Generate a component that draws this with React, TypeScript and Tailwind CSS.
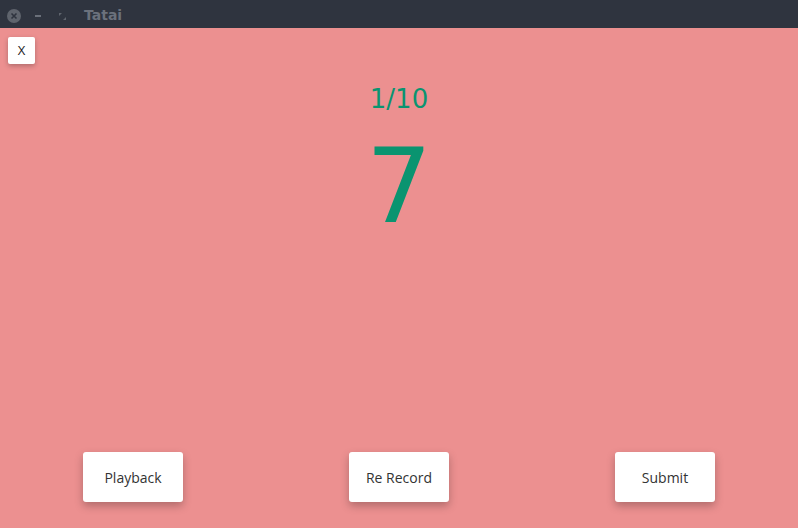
import React from "react";

export default function App() {
  return (
    <div className="w-[798px] h-[528px] flex flex-col overflow-hidden">
      <div className="h-[28px] bg-[#2f343f] flex items-center shrink-0">
        <div className="ml-[7px] w-[14px] h-[14px] rounded-full bg-[#5f646d] flex items-center justify-center mt-[4px]">
          <svg width="8" height="8" viewBox="0 0 8 8">
            <path d="M1.5 1.5 L6.5 6.5 M6.5 1.5 L1.5 6.5" stroke="#2f343f" strokeWidth="1.6" />
          </svg>
        </div>
        <div className="ml-[14px] w-[6px] h-[2px] bg-[#6b707a] mt-[4px]" />
        <svg className="ml-[18px] mt-[4px]" width="7" height="7" viewBox="0 0 7 7">
          <path d="M0 0 L3 0 L0 3 Z M7 7 L4 7 L7 4 Z" fill="#5f646d" />
        </svg>
        <span className="ml-[18px] mt-[3px] text-[14px] font-bold text-[#6b717c] font-['DejaVu_Sans',sans-serif]">Tatai</span>
      </div>
      <div className="flex-1 bg-[#ec9090] relative flex flex-col">
        <button className="absolute left-[8px] top-[9px] w-[27px] h-[27px] bg-white rounded-[2px] shadow-[0_2px_5px_rgba(0,0,0,0.25)] text-[13px] text-[#222] font-['Open_Sans',sans-serif] flex items-center justify-center">
          X
        </button>
        <div className="flex flex-col items-center pt-[54px] text-[#0a9470] font-['DejaVu_Sans',sans-serif]">
          <div className="text-[26px] leading-[34px]">1/10</div>
          <div className="text-[104px] leading-[120px] mt-[10px]">7</div>
        </div>
        <div className="mt-auto mb-[26px] flex justify-around">
          {["Playback", "Re Record", "Submit"].map((t) => (
            <button
              key={t}
              className="w-[100px] h-[50px] bg-white rounded-[3px] shadow-[0_4px_8px_rgba(0,0,0,0.25)] text-[14px] text-[#333] font-['Open_Sans',sans-serif] flex items-center justify-center pt-[1px]"
            >
              {t}
            </button>
          ))}
        </div>
      </div>
    </div>
  );
}
